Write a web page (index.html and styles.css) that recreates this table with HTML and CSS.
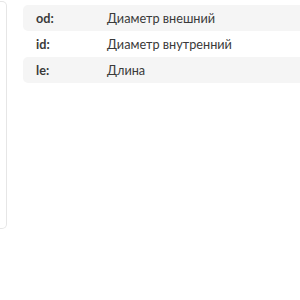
FILE: index.html
```html
<!DOCTYPE html>
<html lang="ru">
<head>
<meta charset="utf-8">
<link rel="stylesheet" href="styles.css">
</head>
<body>
<div class="layout">
  <aside class="sidebar"></aside>
  <section class="content">
    <table class="params">
      <tr class="row shaded"><td class="key">od:</td><td class="val">Диаметр внешний</td></tr>
      <tr class="row"><td class="key">id:</td><td class="val">Диаметр внутренний</td></tr>
      <tr class="row shaded"><td class="key">le:</td><td class="val">Длина</td></tr>
    </table>
  </section>
</div>
</body>
</html>
```
FILE: styles.css
```css
html, body {
  margin: 0;
  padding: 0;
  background: #fff;
}
body {
  font-family: Lato, "Noto Sans", sans-serif;
  font-size: 12.7px;
  color: #3a3a3a;
}
.layout {
  display: flex;
  gap: 16px;
  padding-top: 1px;
}
.sidebar {
  flex: 0 0 7px;
  height: 228px;
  box-sizing: border-box;
  border: 1px solid #e6e6e6;
  border-left: none;
  border-radius: 0 5px 5px 0;
}
.content {
  flex: 1;
  min-width: 0;
  padding-top: 4px;
}
.params {
  width: 100%;
  border-collapse: separate;
  border-spacing: 0;
}
.row td {
  height: 26px;
  padding: 0;
  vertical-align: middle;
}
.row.shaded td {
  background: #f5f5f5;
}
.row.shaded td:first-child {
  border-radius: 5px 0 0 5px;
}
.key {
  width: 84px;
  padding-left: 13px !important;
  font-weight: 700;
  box-sizing: border-box;
}
.val {
  font-weight: 400;
}
```
